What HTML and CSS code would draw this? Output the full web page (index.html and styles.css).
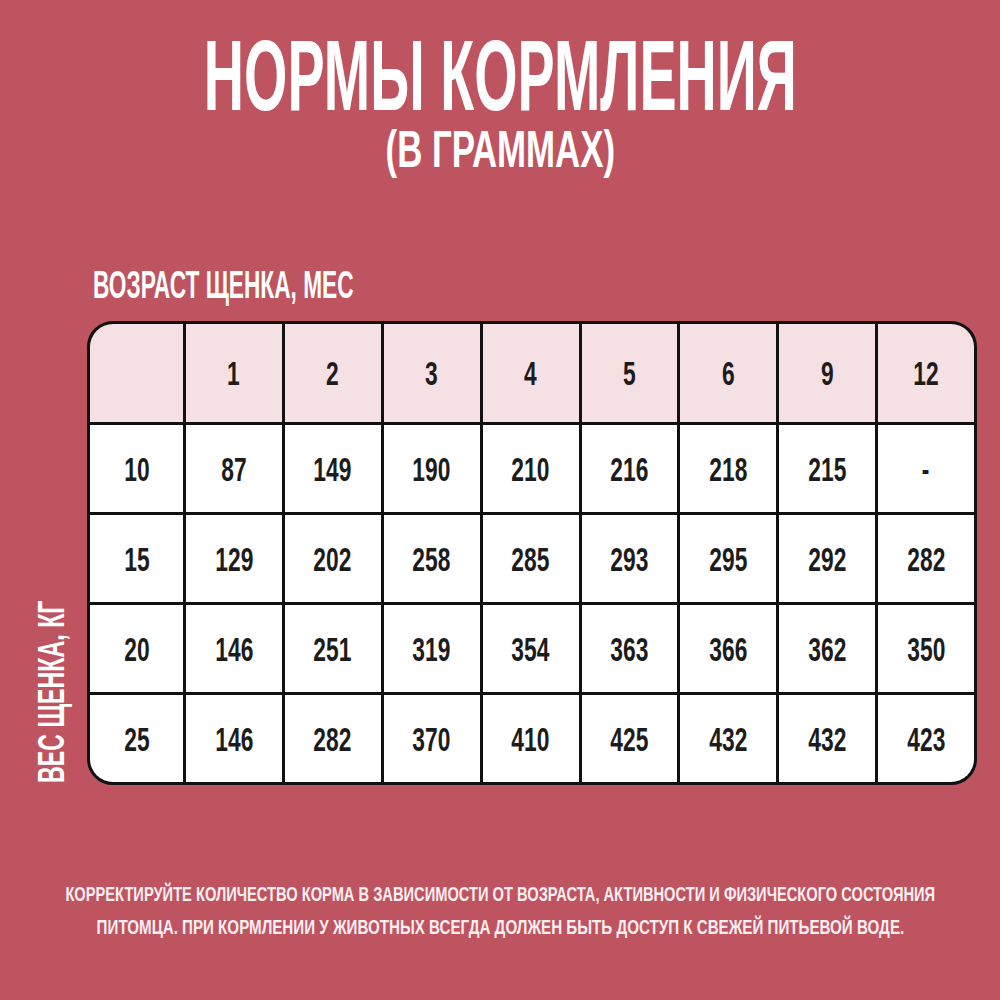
FILE: index.html
```html
<!DOCTYPE html>
<html lang="ru">
<head>
<meta charset="utf-8">
<title>Нормы кормления</title>
<link rel="stylesheet" href="styles.css">
</head>
<body>
<main class="page">
  <header class="head">
    <div class="line title"><span class="sq">НОРМЫ КОРМЛЕНИЯ</span></div>
    <div class="line subtitle"><span class="sq">(В ГРАММАХ)</span></div>
  </header>

  <div class="age-label"><span class="sq">ВОЗРАСТ ЩЕНКА, МЕС</span></div>

  <section class="chart">
    <div class="weight-col"><span class="weight-label">ВЕС ЩЕНКА, КГ</span></div>
    <div class="grid">
      <div class="cell head-cell"></div>
      <div class="cell head-cell"><span class="num">1</span></div>
      <div class="cell head-cell"><span class="num">2</span></div>
      <div class="cell head-cell"><span class="num">3</span></div>
      <div class="cell head-cell"><span class="num">4</span></div>
      <div class="cell head-cell"><span class="num">5</span></div>
      <div class="cell head-cell"><span class="num">6</span></div>
      <div class="cell head-cell"><span class="num">9</span></div>
      <div class="cell head-cell"><span class="num">12</span></div>

      <div class="cell"><span class="num">10</span></div>
      <div class="cell"><span class="num">87</span></div>
      <div class="cell"><span class="num">149</span></div>
      <div class="cell"><span class="num">190</span></div>
      <div class="cell"><span class="num">210</span></div>
      <div class="cell"><span class="num">216</span></div>
      <div class="cell"><span class="num">218</span></div>
      <div class="cell"><span class="num">215</span></div>
      <div class="cell"><span class="num">-</span></div>

      <div class="cell"><span class="num">15</span></div>
      <div class="cell"><span class="num">129</span></div>
      <div class="cell"><span class="num">202</span></div>
      <div class="cell"><span class="num">258</span></div>
      <div class="cell"><span class="num">285</span></div>
      <div class="cell"><span class="num">293</span></div>
      <div class="cell"><span class="num">295</span></div>
      <div class="cell"><span class="num">292</span></div>
      <div class="cell"><span class="num">282</span></div>

      <div class="cell"><span class="num">20</span></div>
      <div class="cell"><span class="num">146</span></div>
      <div class="cell"><span class="num">251</span></div>
      <div class="cell"><span class="num">319</span></div>
      <div class="cell"><span class="num">354</span></div>
      <div class="cell"><span class="num">363</span></div>
      <div class="cell"><span class="num">366</span></div>
      <div class="cell"><span class="num">362</span></div>
      <div class="cell"><span class="num">350</span></div>

      <div class="cell"><span class="num">25</span></div>
      <div class="cell"><span class="num">146</span></div>
      <div class="cell"><span class="num">282</span></div>
      <div class="cell"><span class="num">370</span></div>
      <div class="cell"><span class="num">410</span></div>
      <div class="cell"><span class="num">425</span></div>
      <div class="cell"><span class="num">432</span></div>
      <div class="cell"><span class="num">432</span></div>
      <div class="cell"><span class="num">423</span></div>
    </div>
  </section>

  <footer class="note">
    <div class="line note-line"><span class="sq">КОРРЕКТИРУЙТЕ КОЛИЧЕСТВО КОРМА В ЗАВИСИМОСТИ ОТ ВОЗРАСТА, АКТИВНОСТИ И ФИЗИЧЕСКОГО СОСТОЯНИЯ</span></div>
    <div class="line note-line note-line-2"><span class="sq">ПИТОМЦА. ПРИ КОРМЛЕНИИ У ЖИВОТНЫХ ВСЕГДА ДОЛЖЕН БЫТЬ ДОСТУП К СВЕЖЕЙ ПИТЬЕВОЙ ВОДЕ.</span></div>
  </footer>
</main>
</body>
</html>
```

FILE: styles.css
```css
html, body {
  margin: 0;
  padding: 0;
  background: #bf5461;
}

.page {
  width: 1000px;
  height: 1000px;
  overflow: hidden;
  background: #bf5461;
  font-family: "Liberation Sans", Arial, sans-serif;
  font-weight: 700;
  color: #ffffff;
}

.line {
  display: flex;
  justify-content: center;
  white-space: nowrap;
}

.sq {
  display: inline-block;
  transform-origin: 50% 50%;
}

.head {
  padding-top: 25px;
}

.title {
  font-size: 100px;
  line-height: 100px;
}

.title .sq {
  transform: scaleX(0.557);
}

.subtitle {
  margin-top: 4px;
  font-size: 52px;
  line-height: 40px;
}

.subtitle .sq {
  transform: scaleX(0.67);
}

.age-label {
  margin-top: 96px;
  padding-left: 93px;
  font-size: 39px;
  line-height: 40px;
  white-space: nowrap;
}

.age-label .sq {
  transform-origin: 0 50%;
  transform: scaleX(0.582);
}

.chart {
  display: flex;
  margin-top: 16px;
}

.weight-col {
  width: 87px;
  display: flex;
  justify-content: center;
  align-items: flex-end;
  padding-left: 16px;
  box-sizing: border-box;
  padding-bottom: 2px;
}

.weight-label {
  writing-mode: vertical-rl;
  white-space: nowrap;
  font-size: 36px;
  line-height: 36px;
  transform-origin: 50% 100%;
  transform: scaleY(0.645) rotate(180deg) translateY(100%);
}

.grid {
  width: 884px;
  display: grid;
  grid-template-columns: 93px repeat(8, 1fr);
  grid-template-rows: 98px repeat(4, 87px);
  gap: 3px;
  background: #111111;
  border: 3px solid #111111;
  border-radius: 26px;
  overflow: hidden;
}

.cell {
  background: #ffffff;
  display: flex;
  align-items: center;
  justify-content: center;
  color: #1c1c1c;
}

.head-cell {
  background: #f5e0e4;
}

.num {
  display: inline-block;
  font-size: 34px;
  line-height: 34px;
  transform: scaleX(0.67);
}

.note {
  margin-top: 93px;
}

.note-line {
  font-size: 20px;
  line-height: 33px;
  color: #fbeef0;
}

.note-line .sq {
  transform: scaleX(0.733);
}

.note-line-2 .sq {
  transform: scaleX(0.757);
}
```
